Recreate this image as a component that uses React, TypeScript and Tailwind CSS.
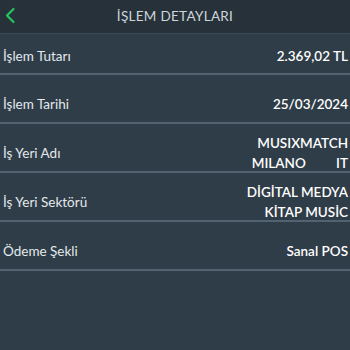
import React from "react";

const rows: { label: string; value: string[] }[] = [
  { label: "İşlem Tutarı", value: ["2.369,02 TL"] },
  { label: "İşlem Tarihi", value: ["25/03/2024"] },
  { label: "İş Yeri Adı", value: ["MUSIXMATCH", "MILANO         IT"] },
  { label: "İş Yeri Sektörü", value: ["DİGİTAL MEDYA", "KİTAP MUSİC"] },
  { label: "Ödeme Şekli", value: ["Sanal POS"] },
];

const App = () => {
  return (
    <main
      className="w-[350px] h-[350px] bg-[#2f3d48] overflow-hidden"
      style={{ fontFamily: "Lato, 'Open Sans', sans-serif" }}
    >
      <div className="relative h-[34px] bg-[#26313a] flex items-center justify-center border-b border-[#3a4853]">
        <svg
          className="absolute left-[4px] top-[7px]"
          width="12"
          height="17"
          viewBox="0 0 12 17"
          fill="none"
        >
          <path
            d="M9.5 2 L3 8.5 L9.5 15"
            stroke="#27c35f"
            strokeWidth="2.2"
            strokeLinecap="round"
            strokeLinejoin="round"
          />
        </svg>
        <h1 className="text-[13.5px] text-[#cfd6db] tracking-[0.3px]">İŞLEM DETAYLARI</h1>
      </div>
      <ul>
        {rows.map((row, i) => (
          <li
            key={row.label}
            className={
              i === 0
                ? "h-[41px] pt-[5px] flex items-center justify-between pl-[3px] pr-[2px] border-b-2 border-[#526270]"
                : "h-[49px] pt-[11px] flex items-center justify-between pl-[3px] pr-[2px] border-b-2 border-[#526270]"
            }
          >
            <span className="text-[13.5px] text-[#e4e9ec]">{row.label}</span>
            <div className="flex flex-col items-end text-[13.5px] font-semibold text-white leading-[20px] whitespace-pre">
              {row.value.map((v) => (
                <span key={v}>{v}</span>
              ))}
            </div>
          </li>
        ))}
      </ul>
    </main>
  );
};

export default App;
